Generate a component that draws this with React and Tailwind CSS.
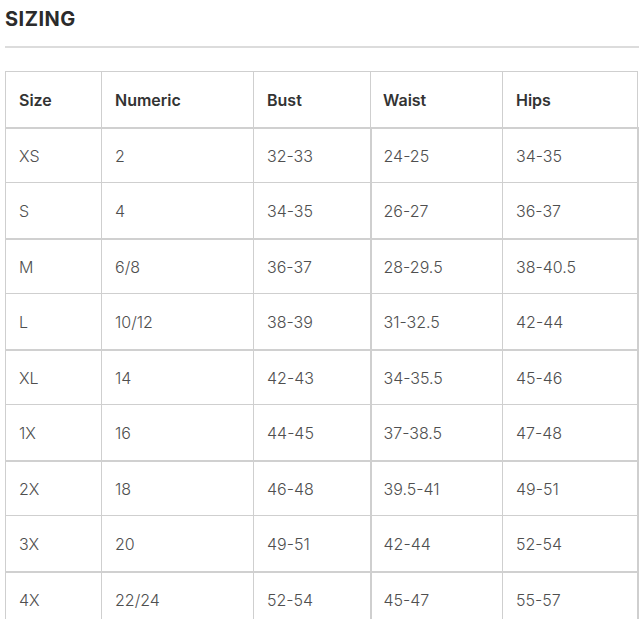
const columns = [
  { label: "Size", width: "w-[96px]" },
  { label: "Numeric", width: "w-[152px]" },
  { label: "Bust", width: "w-[117px]" },
  { label: "Waist", width: "w-[132px]" },
  { label: "Hips", width: "w-[135px]" },
];

const rows = [
  ["XS", "2", "32-33", "24-25", "34-35"],
  ["S", "4", "34-35", "26-27", "36-37"],
  ["M", "6/8", "36-37", "28-29.5", "38-40.5"],
  ["L", "10/12", "38-39", "31-32.5", "42-44"],
  ["XL", "14", "42-43", "34-35.5", "45-46"],
  ["1X", "16", "44-45", "37-38.5", "47-48"],
  ["2X", "18", "46-48", "39.5-41", "49-51"],
  ["3X", "20", "49-51", "42-44", "52-54"],
  ["4X", "22/24", "52-54", "45-47", "55-57"],
];

export default function App() {
  return (
    <div
      className="bg-white min-h-[619px] pl-[5px] pt-[7px]"
      style={{ fontFamily: "Inter, 'Noto Sans', sans-serif" }}
    >
      <h2 className="text-[20px] leading-[24px] font-bold tracking-[0.5px] text-[#2b2b2b]">
        SIZING
      </h2>
      <div className="mt-[15px] h-[2px] bg-[#dcdcdc]" />

      <table className="mt-[23px] w-[632px] border-collapse table-fixed text-left">
        <thead>
          <tr className="h-[56px]">
            {columns.map((c, j) => (
              <th
                key={c.label}
                className={`${c.width} border border-[#cfcfcf] pt-[2px] ${
                  j === 3 ? "pl-[12px]" : "pl-[13px]"
                } text-[16px] font-semibold text-[#333]`}
              >
                {c.label}
              </th>
            ))}
          </tr>
        </thead>
        <tbody>
          {rows.map((r, i) => (
            <tr
              key={r[0]}
              className={
                i % 2 === 0
                  ? "h-[55px] border-t-2 border-[#d0d0d0]"
                  : "h-[56px]"
              }
            >
              {r.map((cell, j) => (
                <td
                  key={j}
                  className={`border-x border-b border-[#cfcfcf] pt-[2px] ${
                    j === 3 ? "pl-[12px]" : "pl-[13px]"
                  } text-[16px] font-light text-[#4f4f4f] ${
                    j === 2 || j === 4 ? "border-r-2" : ""
                  }`}
                >
                  {cell}
                </td>
              ))}
            </tr>
          ))}
        </tbody>
      </table>
    </div>
  );
}
